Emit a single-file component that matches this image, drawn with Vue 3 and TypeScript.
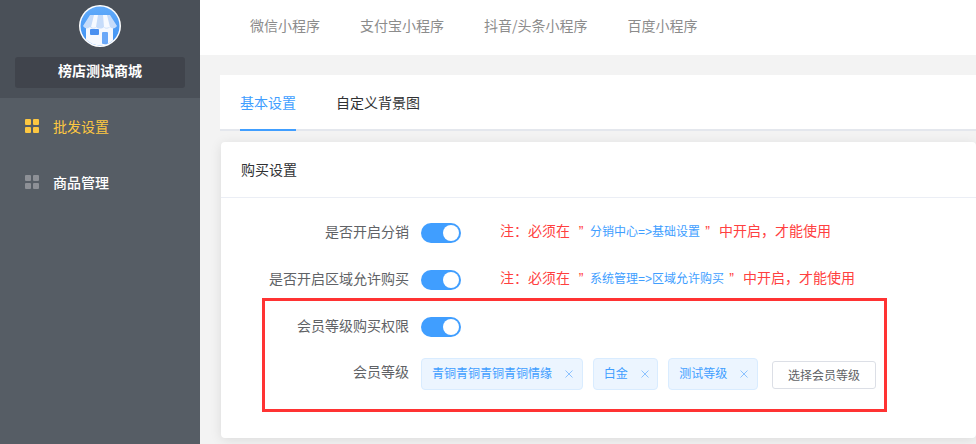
<script setup lang="ts">
const topTabs: string[] = ['微信小程序', '支付宝小程序', '抖音/头条小程序', '百度小程序']
const tags: string[] = ['青铜青铜青铜青铜情缘', '白金', '测试等级']
</script>

<template>
  <div class="page">
    <aside class="side">
      <div class="brand">
        <div class="logo">
          <svg width="42" height="42" viewBox="0 0 42 42">
            <defs>
              <clipPath id="c"><circle cx="21" cy="21" r="19.5" /></clipPath>
              <linearGradient id="g" x1="0" y1="0" x2="0" y2="1">
                <stop offset="0" stop-color="#62acfb" />
                <stop offset="1" stop-color="#3d90f2" />
              </linearGradient>
            </defs>
            <circle cx="21" cy="21" r="21" fill="#fff" />
            <g clip-path="url(#c)">
              <rect width="42" height="42" fill="url(#g)" />
              <rect x="7" y="21" width="27" height="21" fill="#f6f9fe" />
              <rect x="11" y="24" width="9" height="6" rx="1" fill="#4a90f0" />
              <rect x="23" y="27" width="6" height="12" rx="1" fill="#6aa8f8" />
              <path d="M11 10h20l7 11c-2 3-5 3-7 1-2 2-5 2-6 0-2 2-6 2-8 0-1 2-4 2-6 0-2 2-5 2-7-1z" fill="#c6dcfa" />
              <path d="M15 10h4l-2 12c-1 1-4 1-5 0zM24 10h4l3 12c-2 1-5 1-6 0z" fill="#fff" opacity=".85" />
            </g>
          </svg>
        </div>
        <div class="shop">榜店测试商城</div>
      </div>
      <nav class="menu">
        <div class="item active">
          <span class="grid"><i></i><i></i><i></i><i></i></span>批发设置
        </div>
        <div class="item">
          <span class="grid"><i></i><i></i><i></i><i></i></span>商品管理
        </div>
      </nav>
    </aside>

    <main class="main">
      <header class="top">
        <span v-for="t in topTabs" :key="t">{{ t }}</span>
      </header>
      <section class="tabs">
        <span class="tab on">基本设置</span>
        <span class="tab">自定义背景图</span>
      </section>
      <section class="card">
        <div class="card-head">购买设置</div>
        <div class="card-body">
          <div class="row">
            <label>是否开启分销</label>
            <span class="switch"></span>
            <span class="note">注：必须在<span class="q first">”</span><em>分销中心=&gt;基础设置</em><span class="q">”</span>中开启，才能使用</span>
          </div>
          <div class="row">
            <label>是否开启区域允许购买</label>
            <span class="switch"></span>
            <span class="note">注：必须在<span class="q first">”</span><em>系统管理=&gt;区域允许购买</em><span class="q">”</span>中开启，才能使用</span>
          </div>
          <div class="row">
            <label>会员等级购买权限</label>
            <span class="switch"></span>
          </div>
          <div class="row tags-row">
            <label>会员等级</label>
            <span v-for="t in tags" :key="t" class="tag">{{ t }}<svg class="x" width="10" height="10" viewBox="0 0 10 10"><path d="M1.5 1.5l7 7M8.5 1.5l-7 7" stroke="#8cc2ff" stroke-width="1" fill="none" /></svg></span>
            <button class="pick">选择会员等级</button>
          </div>
        </div>
        <div class="mark"></div>
      </section>
    </main>
  </div>
</template>

<style>
html, body { margin: 0; background: #f3f3f3; overflow: hidden; }
</style>

<style scoped>
.page {
  display: flex;
  width: 976px;
  height: 444px;
  overflow: hidden;
  font-family: "Liberation Sans", "Noto Sans CJK SC", sans-serif;
  font-size: 14px;
}
.side { width: 200px; flex: none; background: #565d65; }
.brand {
  height: 98px;
  box-sizing: border-box;
  background: #4a5058;
  padding: 5px 15px 0;
  display: flex;
  flex-direction: column;
  align-items: center;
}
.logo { height: 42px; }
.shop {
  margin-top: 10px;
  width: 170px;
  height: 31px;
  line-height: 29px;
  text-align: center;
  background: #40444c;
  border-radius: 3px;
  color: #fff;
  font-weight: 700;
}
.item {
  height: 56px;
  display: flex;
  align-items: center;
  padding-left: 25px;
  color: #fff;
  font-weight: 500;
  gap: 14px;
}
.item.active { color: #fdc741; font-weight: 400; }
.grid {
  width: 14px;
  height: 14px;
  display: grid;
  grid-template-columns: 6px 6px;
  grid-auto-rows: 6px;
  gap: 2px;
}
.grid i { background: #8d9096; border-radius: 1px; }
.active .grid i { background: #fdc741; }
.main { flex: 1; min-width: 0; }
.top {
  height: 55px;
  box-sizing: border-box;
  padding: 0 0 5px 50px;
  background: #fff;
  display: flex;
  align-items: center;
  gap: 40px;
  color: #8c8c8c;
  font-family: "Noto Sans CJK SC", sans-serif;
}
.tabs {
  margin: 20px 0 0 20px;
  height: 56px;
  box-sizing: border-box;
  background: #fff;
  border-bottom: 2px solid #e4e7ed;
  padding-left: 20px;
  display: flex;
  gap: 40px;
  color: #303133;
}
.tab { height: 56px; line-height: 57px; box-sizing: border-box; }
.tab.on { color: #409eff; border-bottom: 2px solid #409eff; }
.card {
  position: relative;
  margin: 11px 0 0 21px;
  height: 296px;
  background: #fff;
  border-radius: 4px;
  box-shadow: 0 2px 12px rgba(0, 0, 0, 0.1);
}
.card-head {
  height: 55px;
  line-height: 56px;
  padding-left: 20px;
  border-bottom: 1px solid #ebeef5;
  color: #303133;
}
.card-body { padding-top: 25px; }
.row { display: flex; align-items: center; height: 20px; margin-bottom: 27px; color: #606266; }
label { width: 188px; text-align: right; margin-right: 12px; flex: none; line-height: 16px; padding-bottom: 3px; }
.switch {
  width: 40px;
  height: 20px;
  border-radius: 10px;
  background: #409eff;
  position: relative;
  flex: none;
}
.switch::after {
  content: "";
  position: absolute;
  top: 2px;
  right: 2px;
  width: 16px;
  height: 16px;
  border-radius: 50%;
  background: #fff;
}
.note { margin-left: 39px; color: #ff4040; white-space: nowrap; line-height: 16px; padding-bottom: 3px; }
.note em { font-style: normal; font-size: 12px; color: #409eff; }
.q { display: inline-block; width: 19px; text-indent: -4px; text-align: center; }
.q.first { width: 20px; text-indent: 2px; }
.tags-row { height: 32px; margin-top: -6px; align-items: flex-start; }
.tags-row label { line-height: 28px; padding: 0; }
.tag {
  height: 32px;
  line-height: 31px;
  box-sizing: border-box;
  padding: 0 7.67px 0 10px;
  margin-right: 10px;
  background: #ecf5ff;
  border: 1px solid #d9ecff;
  border-radius: 4px;
  color: #409eff;
  font-size: 12px;
  white-space: nowrap;
}
.x { margin-left: 12px; vertical-align: -1px; }
.pick {
  margin: 3px 0 0 4px;
  width: 104px;
  height: 28px;
  padding: 0 0 2px;
  background: #fff;
  border: 1px solid #dcdfe6;
  border-radius: 3px;
  color: #606266;
  font: inherit;
  font-size: 12px;
}
.mark {
  position: absolute;
  left: 41px;
  top: 156px;
  width: 619px;
  height: 108px;
  border: 3px solid #f33;
  pointer-events: none;
}
</style>
